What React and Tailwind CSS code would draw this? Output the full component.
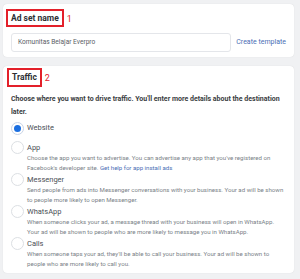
import React from "react";

const font = { fontFamily: "Roboto, 'Liberation Sans', Arial, sans-serif" };

function Radio({ checked }) {
  return checked ? (
    <div className="-mt-[1.5px] flex h-[13px] w-[13px] shrink-0 items-center justify-center rounded-full border border-[#c9d4e6] bg-white">
      <div className="h-[7px] w-[7px] rounded-full bg-[#1b6fe0]" />
    </div>
  ) : (
    <div className="-mt-[1.5px] h-[13px] w-[13px] shrink-0 rounded-full border border-[#dcdfe3] bg-white" />
  );
}

function Option({ label, checked, children, className }) {
  return (
    <div className={"flex gap-[3px] " + (className || "")}>
      <Radio checked={checked} />
      <div className="flex-1">
        <div className="text-[7.5px] leading-[10px] text-[#4b4f56]">{label}</div>
        {children && (
          <div className="text-[6.1px] leading-[10px] text-[#7a7f87]">{children}</div>
        )}
      </div>
    </div>
  );
}

export default function App() {
  return (
    <div className="h-[279px] w-[300px] overflow-hidden bg-[#f0f1f3] px-[3px] pt-[4px]" style={font}>
      <section className="mr-[3px] rounded-[4px] bg-white px-[8px] pb-[5px] pt-[5px] shadow-[0_0_1px_rgba(0,0,0,0.15)]">
        <div className="flex items-center">
          <div className="-ml-[5px] border-2 border-[#e3202a] px-[3px] py-[2px] text-[8.5px] font-bold leading-[10px] text-[#2d2f33]">
            Ad set name
          </div>
          <span className="ml-[3px] mt-[3px] text-[9px] text-[#e3202a]">1</span>
        </div>
        <div className="mt-[6px] flex items-center gap-[5px]">
          <div className="flex h-[19px] flex-1 items-center rounded-[3px] border border-[#e4e6ea] px-[6px] text-[6.6px] text-[#5a5e66]">
            Komunitas Belajar Everpro
          </div>
          <span className="whitespace-nowrap text-[7px] text-[#4a6fb5]">Create template</span>
        </div>
      </section>

      <section className="mr-[3px] mt-[9px] h-[207px] rounded-[4px] bg-white px-[8px] pt-[2px] shadow-[0_0_1px_rgba(0,0,0,0.15)]">
        <div className="flex items-center">
          <div className="-ml-[4px] border-2 border-[#e3202a] px-[3px] py-[2px] text-[8.5px] font-bold leading-[11px] text-[#2d2f33]">
            Traffic
          </div>
          <span className="ml-[3px] mt-[3px] text-[9px] text-[#e3202a]">2</span>
        </div>
        <p className="mt-[6px] text-[7px] font-bold leading-[13px] text-[#3a3d42]">
          Choose where you want to drive traffic. You'll enter more details about the destination later.
        </p>
        <div className="mt-[4px]">
          <Option label="Website" checked />
          <Option label="App" className="mt-[8px]">
            Choose the app you want to advertise. You can advertise any app that you've registered on Facebook's developer site.{" "}
            <span className="text-[#4a6fb5]">Get help for app install ads</span>
          </Option>
          <Option label="Messenger" className="mt-[2px]">
            Send people from ads into Messenger conversations with your business. Your ad will be shown to people more likely to open Messenger.
          </Option>
          <Option label="WhatsApp" className="mt-[2px]">
            When someone clicks your ad, a message thread with your business will open in WhatsApp. Your ad will be shown to people who are more likely to message you in WhatsApp.
          </Option>
          <Option label="Calls" className="mt-[2px]">
            When someone taps your ad, they'll be able to call your business. Your ad will be shown to people who are more likely to call you.
          </Option>
        </div>
      </section>
    </div>
  );
}
